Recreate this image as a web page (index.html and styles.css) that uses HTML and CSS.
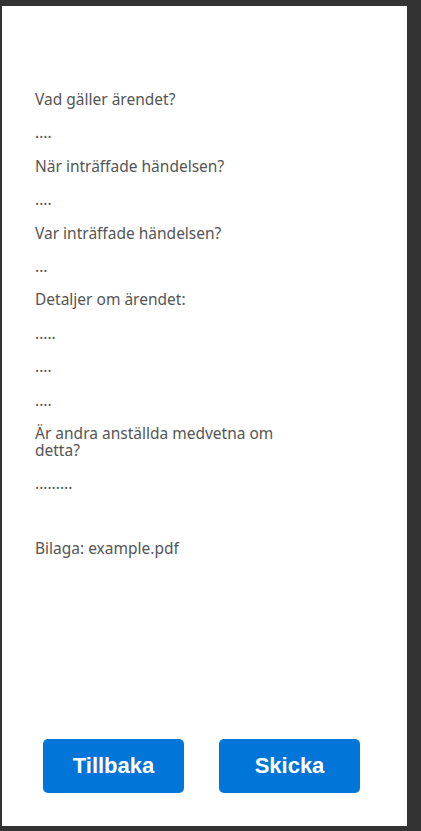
FILE: index.html
```html
<!DOCTYPE html>
<html lang="sv">
  <head>
    <meta charset="UTF-8" />
    <meta name="viewport" content="width=device-width, initial-scale=1.0" />
    <title>Sammanfattning</title>
    <link rel="stylesheet" href="styles.css">
  </head>
  <body>
    <div id="wrapper">
      <div id="summary">
        <p>Vad gäller ärendet?</p>
        <p>....</p>
        <p>När inträffade händelsen?</p>
        <p>....</p>
        <p>Var inträffade händelsen?</p>
        <p>...</p>
        <p>Detaljer om ärendet:</p>
        <p>.....</p>
        <p>....</p>
        <p>....</p>
        <p>Är andra anställda medvetna om detta?</p>
        <p>.........</p>
        <p class="attachment">Bilaga: example.pdf</p>
      </div>

      <div id="buttons">
        <button type="button">Tillbaka</button>
        <button type="button">Skicka</button>
      </div>
    </div>
  </body>
</html>
```

FILE: styles.css
```css
* {
  padding: 0;
  margin: 0;
  box-sizing: border-box;
}
body {
  background: #333333;
  padding: 6px 14px 5px 2px;
  font-family: "Noto Sans", sans-serif;
}
#wrapper {
  background: #ffffff;
  height: 820px;
  display: flex;
  flex-direction: column;
  justify-content: space-between;
}

#summary {
  padding: 85px 0 0 33px;
  width: 320px;
  color: #555555;
  font-size: 15.5px;
  line-height: 17px;
}
#summary p {
  margin-bottom: 16.4px;
}
#summary .attachment {
  margin-top: 48px;
}

#buttons {
  display: flex;
  gap: 35px;
  padding: 0 0 33px 41px;
}
#buttons button {
  width: 141px;
  height: 54px;
  border: none;
  border-radius: 5px;
  background: #0275d8;
  color: #ffffff;
  font-family: "Liberation Sans", Arial, sans-serif;
  font-weight: bold;
  font-size: 22px;
}
```
